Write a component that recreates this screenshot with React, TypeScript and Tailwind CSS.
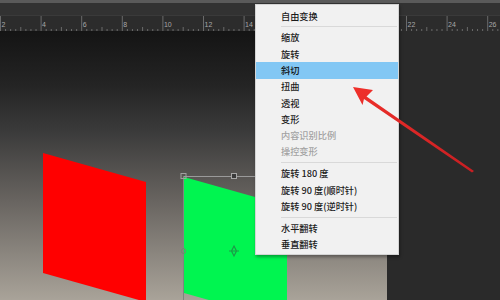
import React from 'react';

type Item = { label: string; disabled?: boolean; active?: boolean } | 'sep';

const ITEMS: Item[] = [
  { label: '自由变换' },
  'sep',
  { label: '缩放' },
  { label: '旋转' },
  { label: '斜切', active: true },
  { label: '扭曲' },
  { label: '透视' },
  { label: '变形' },
  { label: '内容识别比例', disabled: true },
  { label: '操控变形', disabled: true },
  'sep',
  { label: '旋转 180 度' },
  { label: '旋转 90 度(顺时针)' },
  { label: '旋转 90 度(逆时针)' },
  'sep',
  { label: '水平翻转' },
  { label: '垂直翻转' },
];

const STEP = 40.6;

function Ruler() {
  const minors = [];
  for (let i = 0; i < 100; i++) {
    const x = i * (STEP / 8);
    const h = i % 8 === 0 ? 16 : i % 4 === 0 ? 5 : 3;
    minors.push(<line key={i} x1={x + 0.5} x2={x + 0.5} y1={16 - h} y2={16} stroke="#6a6a6a" strokeWidth={1} />);
  }
  // 16, 18, 20 sit under the menu, so they are left out
  const labels = [];
  for (let k = 0; k < 13; k++) {
    if (k >= 7 && k <= 9) continue;
    labels.push(
      <text key={k} x={k * STEP + 1.5} y={10.5} fontSize={7} fill="#a8a8a8" fontFamily="Liberation Sans, sans-serif">
        {(k + 1) * 2}
      </text>
    );
  }
  return (
    <svg width={500} height={16} className="block">
      {minors}
      {labels}
    </svg>
  );
}

function Canvas() {
  return (
    <svg width={387} height={269} viewBox="0 31 387 269" className="block">
      <polygon points="43,153 146,182 146,302 43,273" fill="#ff0000" />
      <polygon points="184,177 287,206 287,322 184,293" fill="#00f550" />
      <line x1={184} y1={176.5} x2={290} y2={176.5} stroke="#9a9a9a" strokeWidth={1} />
      <line x1={183.5} y1={176} x2={183.5} y2={300} stroke="#7f857f" strokeWidth={1} />
      <rect x={181} y={173.5} width={5} height={5} fill="none" stroke="#a0a0a0" strokeWidth={1} />
      <rect x={231.5} y={173.5} width={5} height={5} fill="#3a3a3a" stroke="#a8a8a8" strokeWidth={1} />
      <rect x={181.5} y={248.5} width={4} height={5} rx={2} fill="none" stroke="#6f8a6f" strokeWidth={1} />
      <path d="M234 246 L236.5 251 L234 256 L231.5 251 Z M229 251 H239" fill="none" stroke="#1c9a48" strokeWidth={1.2} />
    </svg>
  );
}

function Arrow() {
  return (
    <svg width={500} height={300} className="absolute left-0 top-0 pointer-events-none">
      <defs>
        <linearGradient id="ar" x1="0" y1="0" x2="1" y2="1">
          <stop offset="0" stopColor="#f0302a" />
          <stop offset="1" stopColor="#c81e22" />
        </linearGradient>
      </defs>
      <polygon
        points="353,87 373,90 366.5,96.5 474,171 472,172.5 364,99 362.5,105"
        fill="url(#ar)"
      />
    </svg>
  );
}

export default function App() {
  return (
    <div className="relative w-[500px] h-[300px] overflow-hidden bg-[#2a2a2a] flex flex-col font-['Noto_Sans_CJK_SC',sans-serif]">
      <div className="h-[3px] bg-[#5a5a5a]" />
      <div className="h-[12px] bg-[#323232]" />
      <div className="h-[16px] bg-[#2c2c2c] border-t border-[#3a3a3a]">
        <Ruler />
      </div>
      <div className="flex flex-1">
        <div className="w-[387px] bg-[linear-gradient(to_bottom,#141414_0%,#242424_20%,#3a3a3a_37%,#686460_63%,#a9a399_100%)]">
          <Canvas />
        </div>
        <div className="flex-1 bg-[#2a2a2a]" />
      </div>

      <div className="absolute left-[255px] top-[4px] w-[144px] h-[251px] bg-[#f1f1f1] border border-[#d4d4d4] shadow-[1px_2px_3px_rgba(0,0,0,0.35)] pt-[3px]">
        {ITEMS.map((it, i) =>
          it === 'sep' ? (
            <div key={i} className="ml-[25px] mr-[1px] mt-[2px] mb-[2.5px] h-px bg-[#d9d9d9]" />
          ) : (
            <div
              key={i}
              className={`h-[16.3px] flex items-center pl-[25px] text-[9.2px] leading-none font-medium whitespace-nowrap ${
                it.active ? 'bg-[#82c7f4] text-[#111]' : it.disabled ? 'text-[#a2a2a2]' : 'text-[#1b1b1b]'
              }`}
            >
              {it.label}
            </div>
          )
        )}
      </div>

      <Arrow />
    </div>
  );
}
